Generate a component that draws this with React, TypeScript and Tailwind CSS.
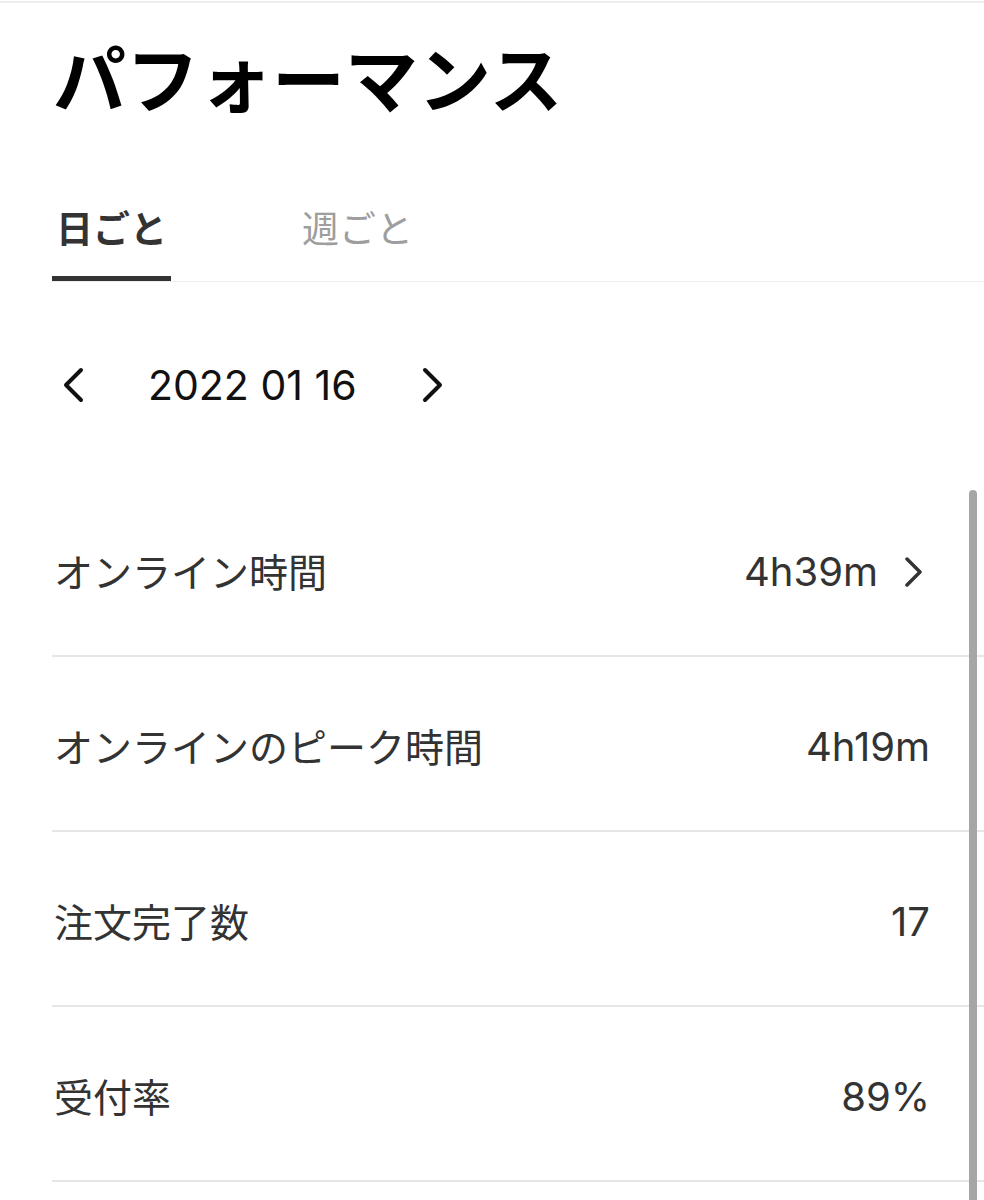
import React from 'react';

interface StatRow {
  label: string;
  value: string;
  link?: boolean;
}

const rows: StatRow[] = [
  { label: 'オンライン時間', value: '4h39m', link: true },
  { label: 'オンラインのピーク時間', value: '4h19m' },
  { label: '注文完了数', value: '17' },
  { label: '受付率', value: '89%' },
];

const ChevronLeft = () => (
  <svg width="24" height="36" viewBox="0 0 24 36" fill="none">
    <polyline points="20,3 5,18 20,33" stroke="#111" strokeWidth="4" strokeLinecap="round" strokeLinejoin="round" />
  </svg>
);

const ChevronRight = ({ small = false }: { small?: boolean }) =>
  small ? (
    <svg width="20" height="30" viewBox="0 0 20 30" fill="none">
      <polyline points="3,2 16,15 3,28" stroke="#333" strokeWidth="3.5" strokeLinecap="round" strokeLinejoin="round" />
    </svg>
  ) : (
    <svg width="24" height="36" viewBox="0 0 24 36" fill="none">
      <polyline points="4,3 19,18 4,33" stroke="#111" strokeWidth="4" strokeLinecap="round" strokeLinejoin="round" />
    </svg>
  );

export default function App() {
  return (
    <div className="relative w-[984px] h-[1200px] overflow-hidden bg-white font-['Inter','Noto_Sans_CJK_JP',sans-serif]">
      <div className="mt-[1px] h-[2px] bg-[#ededed]" />

      <h1 className="pl-[53px] pt-[38px] text-[73px] leading-[80px] font-bold text-black">
        パフォーマンス
      </h1>

      {/* tabs */}
      <div className="mt-[87px] ml-[52px] flex border-b border-[#eeeeee]">
        <div className="w-[119px] pb-[24px] text-center text-[37px] leading-[44px] font-bold text-[#333] border-b-[5px] border-[#333]">
          日ごと
        </div>
        <div className="ml-[127px] w-[119px] pb-[24px] text-center text-[37px] leading-[44px] text-[#9e9e9e] border-b-[5px] border-transparent">
          週ごと
        </div>
      </div>

      {/* date picker */}
      <div className="mt-[76px] ml-[61px] flex h-[54px] items-center">
        <ChevronLeft />
        <span className="ml-[63px] text-[41px] leading-none text-[#111]">2022 01 16</span>
        <div className="ml-[64px]">
          <ChevronRight />
        </div>
      </div>

      {/* stats */}
      <div className="mt-[70px] ml-[52px]">
        {rows.map((row) => (
          <div
            key={row.label}
            className="flex h-[175px] items-center justify-between border-b-2 border-[#e6e6e6] pt-[7px] pl-[2px] pr-[54px]"
          >
            <span className="text-[39px] leading-none text-[#333]">{row.label}</span>
            <div className="flex items-center">
              <span className="text-[40px] leading-none text-[#333]">{row.value}</span>
              {row.link && (
                <div className="ml-[26px] mr-[6px]">
                  <ChevronRight small />
                </div>
              )}
            </div>
          </div>
        ))}
      </div>

      {/* scroll indicator */}
      <div className="absolute right-[7px] top-[490px] h-[760px] w-[8px] rounded-full bg-[#a6a6a6]" />
    </div>
  );
}
